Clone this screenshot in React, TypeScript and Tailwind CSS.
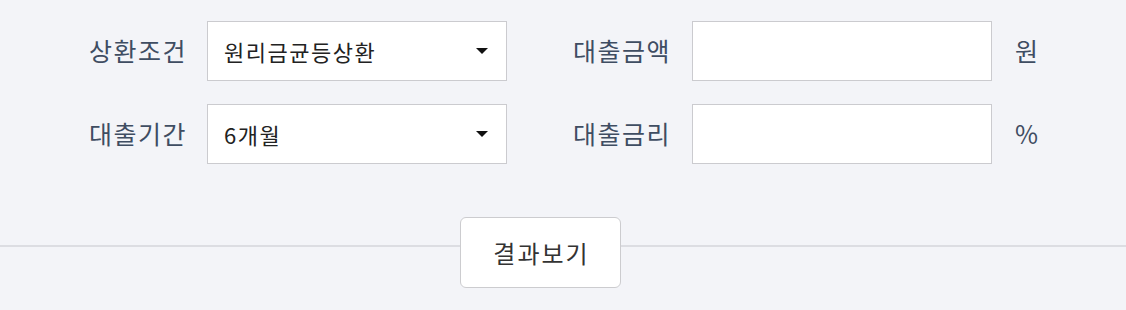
export default function App() {
  const font = { fontFamily: '"Noto Sans CJK KR", "Noto Sans", sans-serif' };

  return (
    <main className="min-h-screen w-full bg-[#f3f4f8]" style={font}>
      <div className="flex flex-col items-center gap-[23px] pt-[21px]">
        <div className="flex items-center">
          <label className="w-[100px] text-right text-[25px] text-[#3f4d62] tracking-[1.5px]">상환조건</label>
          <div className="ml-[20px] flex h-[60px] w-[300px] items-center justify-between border border-[#cbcbcf] bg-white pl-[16px] pr-[18px]">
            <span className="text-[22px] text-[#222] tracking-[1.5px]">원리금균등상환</span>
            <span className="h-0 w-0 border-x-[6px] border-t-[6px] border-x-transparent border-t-[#111]" />
          </div>
          <label className="ml-[66px] w-[98px] text-right text-[25px] text-[#3f4d62] tracking-[1.5px]">대출금액</label>
          <input className="ml-[21px] h-[60px] w-[300px] border border-[#cbcbcf] bg-white px-4 text-[20px] outline-none" />
          <span className="ml-[23px] w-[24px] text-[25px] text-[#3f4d62]">원</span>
        </div>
        <div className="flex items-center">
          <label className="w-[100px] text-right text-[25px] text-[#3f4d62] tracking-[1.5px]">대출기간</label>
          <div className="ml-[20px] flex h-[60px] w-[300px] items-center justify-between border border-[#cbcbcf] bg-white pl-[16px] pr-[18px]">
            <span className="text-[22px] text-[#222] tracking-[1.5px]">6개월</span>
            <span className="h-0 w-0 border-x-[6px] border-t-[6px] border-x-transparent border-t-[#111]" />
          </div>
          <label className="ml-[66px] w-[98px] text-right text-[25px] text-[#3f4d62] tracking-[1.5px]">대출금리</label>
          <input className="ml-[21px] h-[60px] w-[300px] border border-[#cbcbcf] bg-white px-4 text-[20px] outline-none" />
          <span className="ml-[23px] w-[24px] text-[25px] text-[#3f4d62]">%</span>
        </div>
      </div>
      <div className="mt-[53px] flex items-start">
        <div className="mt-[28px] h-[2px] w-[460px] bg-[#dcdde2]" />
        <button className="h-[71px] w-[161px] rounded-[6px] border border-[#cccccf] bg-white pl-[2px] text-[24px] text-[#333] tracking-[2px]">
          결과보기
        </button>
        <div className="mt-[28px] h-[2px] flex-1 bg-[#dcdde2]" />
      </div>
    </main>
  );
}
